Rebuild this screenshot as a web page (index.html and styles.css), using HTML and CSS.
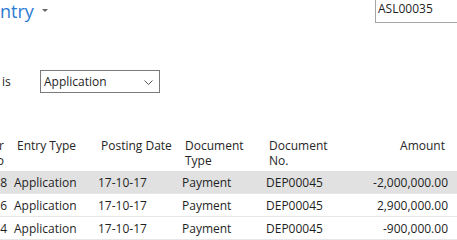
FILE: index.html
```html
<!DOCTYPE html>
<html>
<head>
  <meta name="viewport" content="width=device-width, initial-scale=1.0">
  <link rel="stylesheet" href="styles.css">
</head>
<body>
  <div class="page">
    <!-- CABECERA -->
    <div class="topbar">
      <h1 class="title">ntry <span class="caret"></span></h1>
      <div class="docno">ASL00035</div>
    </div>

    <!-- FILTRO -->
    <div class="filter">
      <span class="filter-label">is</span>
      <div class="select">
        <span>Application</span>
        <svg class="chevron" width="9" height="5" viewBox="0 0 9 5">
          <path d="M0.5 0.5 L4.5 4.5 L8.5 0.5" fill="none" stroke="#555" stroke-width="1"/>
        </svg>
      </div>
    </div>

    <!-- LISTA -->
    <div class="lista">
      <div class="fila cabecera">
        <div class="c num">r<br>o.</div>
        <div class="c">Entry Type</div>
        <div class="c">Posting Date</div>
        <div class="c">Document<br>Type</div>
        <div class="c">Document<br>No.</div>
        <div class="c importe">Amount</div>
      </div>
      <div class="fila seleccionada">
        <div class="c num">8</div>
        <div class="c">Application</div>
        <div class="c">17-10-17</div>
        <div class="c">Payment</div>
        <div class="c">DEP00045</div>
        <div class="c importe">-2,000,000.00</div>
      </div>
      <div class="fila">
        <div class="c num">6</div>
        <div class="c">Application</div>
        <div class="c">17-10-17</div>
        <div class="c">Payment</div>
        <div class="c">DEP00045</div>
        <div class="c importe">2,900,000.00</div>
      </div>
      <div class="fila">
        <div class="c num">74</div>
        <div class="c">Application</div>
        <div class="c">17-10-17</div>
        <div class="c">Payment</div>
        <div class="c">DEP00045</div>
        <div class="c importe">-900,000.00</div>
      </div>
    </div>
  </div>
</body>
</html>
```

FILE: styles.css
```css
/* GENERAL */
body {
  margin: 0;
  background: #ffffff;
  font-family: "Segoe UI", "Open Sans", sans-serif;
  font-size: 12px;
  color: #1f1f1f;
  overflow: hidden;
}

.page {
  width: 457px;
  height: 240px;
  overflow: hidden;
}

/* CABECERA */
.topbar {
  display: flex;
  align-items: flex-start;
  height: 23px;
}

.title {
  margin: 0;
  font-size: 18px;
  font-weight: 400;
  line-height: 23px;
  color: #2b7bd5;
  display: flex;
  align-items: center;
  gap: 8px;
}

.caret {
  width: 0;
  height: 0;
  border-left: 3px solid transparent;
  border-right: 3px solid transparent;
  border-top: 3px solid #666;
  margin-top: -2px;
}

.docno {
  margin-left: auto;
  margin-right: -30px;
  flex-shrink: 0;
  width: 112px;
  height: 23px;
  box-sizing: border-box;
  border-left: 1px solid #a6a6a6;
  border-bottom: 1px solid #a6a6a6;
  padding-left: 2px;
  line-height: 18px;
}

/* FILTRO */
.filter {
  display: flex;
  align-items: center;
  margin-top: 47px;
  height: 23px;
}

.filter-label {
  width: 40px;
  padding-left: 2px;
  box-sizing: border-box;
}

.select {
  width: 120px;
  height: 23px;
  box-sizing: border-box;
  border: 1px solid #7a7a7a;
  display: flex;
  align-items: center;
  justify-content: space-between;
  padding: 0 6px 0 3px;
}

.chevron { display: block; margin-top: 1px; }

/* LISTA */
.lista {
  margin-top: 45px;
}

.fila {
  display: grid;
  grid-template-columns: 10px 84px 84px 84px 84px 106px;
  height: 23px;
  box-sizing: border-box;
  border-bottom: 1px solid #e6e6e6;
  align-items: center;
}

.fila .c {
  padding: 0 4px;
  white-space: nowrap;
}

.fila .num {
  padding: 0 3px 0 0;
  text-align: right;
  direction: rtl;
}

.fila .importe { text-align: right; }

.cabecera {
  height: 33px;
  align-items: start;
  border-bottom: none;
  line-height: 15px;
  color: #262626;
}

.cabecera .c { padding: 0 7px; }
.cabecera .num { padding: 0 6px 0 0; }

.seleccionada {
  background: #e1e1e1;
}
```
